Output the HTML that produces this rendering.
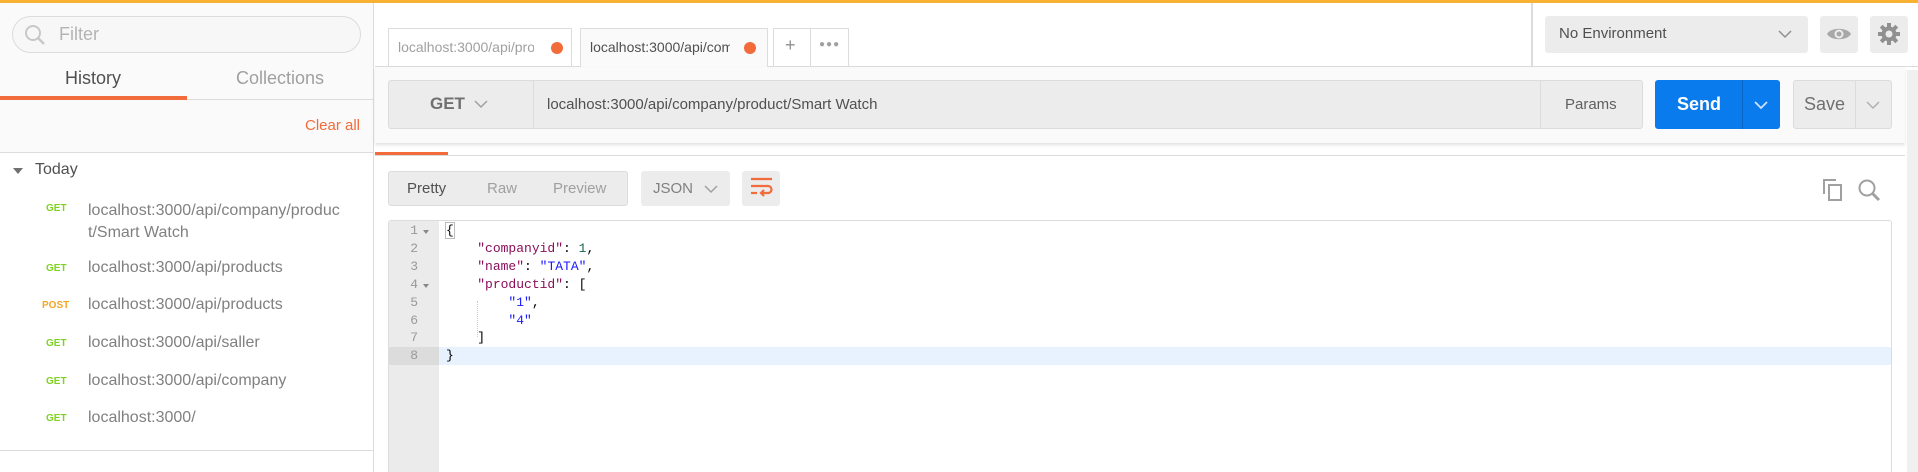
<!DOCTYPE html>
<html><head><meta charset="utf-8"><style>
*{box-sizing:border-box;margin:0;padding:0}
body{width:1918px;height:472px;overflow:hidden;background:#fff;font-family:"Liberation Sans",sans-serif;position:relative;color:#505050}
.a{position:absolute}
.topbar{left:0;top:0;width:1918px;height:3px;background:#f8b133}
.side{left:0;top:3px;width:374px;height:469px;background:#fafafa;border-right:1px solid #dcdcdc}
.filter{left:12px;top:16px;width:349px;height:37px;border:1px solid #dcdcdc;border-radius:19px;background:#f7f7f7}
.txt{white-space:nowrap}
.method{font-size:10px;font-weight:bold;color:#7ed321}
.url{font-size:16px;color:#808080}
.btn{background:#ececec;border:1px solid #dcdcdc;border-radius:3px}
.mono{font-family:"Liberation Mono",monospace;font-size:13px}
</style></head><body>
<div class="a topbar"></div>
<div class="a side"></div>
<div class="a filter"></div>
<svg class="a" style="left:24px;top:24px" width="22" height="22" viewBox="0 0 22 22"><circle cx="9" cy="9" r="7" fill="none" stroke="#c8c8c8" stroke-width="2"/><line x1="14" y1="14" x2="20" y2="20" stroke="#c8c8c8" stroke-width="2.5"/></svg>
<div class="a txt" style="left:59px;top:24px;font-size:18px;color:#b4b4b4">Filter</div>
<div class="a txt" style="left:65px;top:68px;font-size:18px;color:#505050">History</div>
<div class="a txt" style="left:236px;top:68px;font-size:18px;color:#a0a0a0">Collections</div>
<div class="a" style="left:0;top:99px;width:374px;height:1px;background:#dcdcdc"></div>
<div class="a" style="left:0;top:96px;width:187px;height:4px;background:#f26b3a"></div>
<div class="a txt" style="left:305px;top:117px;font-size:15px;color:#f26b3a">Clear all</div>
<div class="a" style="left:0;top:152px;width:374px;height:1px;background:#dcdcdc;"></div>
<div class="a" style="left:0;top:153px;width:373px;height:319px;background:#fff"></div>
<div class="a" style="left:0;top:450px;width:373px;height:1px;background:#dcdcdc;"></div>
<div class="a" style="left:13px;top:168px;width:0;height:0;border-left:5px solid transparent;border-right:5px solid transparent;border-top:6px solid #707070"></div>
<div class="a txt" style="left:35px;top:161px;font-size:16px;color:#505050">Today</div>
<div class="a txt method" style="left:46px;top:203px">GET</div>
<div class="a url" style="left:88px;top:200px;line-height:22px;width:256px;word-break:break-all">localhost:3000/api/company/product/Smart Watch</div>
<div class="a txt method" style="left:46px;top:263px">GET</div>
<div class="a txt url" style="left:88px;top:259px">localhost:3000/api/products</div>
<div class="a txt method" style="left:42px;top:300px;color:#f5a623">POST</div>
<div class="a txt url" style="left:88px;top:296px">localhost:3000/api/products</div>
<div class="a txt method" style="left:46px;top:338px">GET</div>
<div class="a txt url" style="left:88px;top:334px">localhost:3000/api/saller</div>
<div class="a txt method" style="left:46px;top:376px">GET</div>
<div class="a txt url" style="left:88px;top:372px">localhost:3000/api/company</div>
<div class="a txt method" style="left:46px;top:413px">GET</div>
<div class="a txt url" style="left:88px;top:409px">localhost:3000/</div>

<!-- tabs -->
<div class="a" style="left:375px;top:66px;width:1543px;height:1px;background:#dcdcdc"></div>
<div class="a" style="left:388px;top:28px;width:184px;height:38px;border:1px solid #dcdcdc;border-bottom:none;background:#fff"></div>
<div class="a txt" style="left:398px;top:39px;font-size:14px;color:#a0a0a0;width:136px;overflow:hidden">localhost:3000/api/products</div>
<div class="a" style="left:551px;top:42px;width:12px;height:12px;border-radius:50%;background:#f26b3a"></div>
<div class="a" style="left:580px;top:28px;width:188px;height:39px;border:1px solid #dcdcdc;border-bottom:none;background:#fafafa"></div>
<div class="a txt" style="left:590px;top:39px;font-size:14px;color:#505050;width:140px;overflow:hidden">localhost:3000/api/company</div>
<div class="a" style="left:744px;top:42px;width:12px;height:12px;border-radius:50%;background:#f26b3a"></div>
<div class="a" style="left:773px;top:28px;width:76px;height:38px;border:1px solid #dcdcdc;border-bottom:none;background:#fff"></div>
<div class="a" style="left:810px;top:28px;width:1px;height:38px;background:#dcdcdc"></div>
<div class="a txt" style="left:785px;top:35px;font-size:18px;color:#909090">+</div>
<div class="a txt" style="left:819px;top:39px;font-size:10px;color:#a0a0a0;letter-spacing:1px">●●●</div>
<div class="a" style="left:1531px;top:3px;width:2px;height:63px;background:#dcdcdc"></div>
<div class="a" style="left:1545px;top:16px;width:263px;height:37px;background:#ececec;border-radius:3px"></div>
<div class="a txt" style="left:1559px;top:25px;font-size:15px;color:#505050">No Environment</div>
<svg class="a" style="left:1778px;top:30px" width="14" height="9"><path d="M1 1l6 6 6-6" fill="none" stroke="#909090" stroke-width="1.5"/></svg>
<div class="a" style="left:1820px;top:16px;width:38px;height:37px;background:#ececec;border-radius:3px"></div>
<svg class="a" style="left:1826px;top:25px" width="26" height="18" viewBox="0 0 26 18"><path d="M1 9C5 2 21 2 25 9C21 16 5 16 1 9Z" fill="#a8a8a8"/><circle cx="13" cy="9" r="4.5" fill="#ececec"/><circle cx="13" cy="9" r="2.5" fill="#a8a8a8"/></svg>
<div class="a" style="left:1870px;top:16px;width:38px;height:37px;background:#ececec;border-radius:3px"></div>
<svg class="a" style="left:1877px;top:22px" width="24" height="24" viewBox="0 0 24 24"><g fill="#909090"><circle cx="12" cy="12" r="7.5"/><rect x="10" y="1" width="4" height="22"/><rect x="1" y="10" width="22" height="4"/><rect x="10" y="1" width="4" height="22" transform="rotate(45 12 12)"/><rect x="10" y="1" width="4" height="22" transform="rotate(-45 12 12)"/></g><circle cx="12" cy="12" r="3.5" fill="#ececec"/></svg>

<!-- request panel -->
<div class="a" style="left:375px;top:67px;width:1530px;height:76px;background:#fafafa;box-shadow:0 2px 3px rgba(0,0,0,.12)"></div>
<div class="a btn" style="left:388px;top:80px;width:1255px;height:49px"></div>
<div class="a" style="left:533px;top:80px;width:1px;height:49px;background:#dcdcdc"></div>
<div class="a" style="left:1540px;top:80px;width:1px;height:49px;background:#dcdcdc"></div>
<div class="a txt" style="left:430px;top:94px;font-size:17px;font-weight:bold;color:#707070">GET</div>
<svg class="a" style="left:474px;top:100px" width="14" height="9"><path d="M1 1l6 6 6-6" fill="none" stroke="#a0a0a0" stroke-width="1.5"/></svg>
<div class="a txt" style="left:547px;top:96px;font-size:15px;color:#505050">localhost:3000/api/company/product/Smart Watch</div>
<div class="a txt" style="left:1565px;top:96px;font-size:15px;color:#606060">Params</div>
<div class="a" style="left:1655px;top:80px;width:125px;height:49px;background:#097bed;border-radius:3px"></div>
<div class="a" style="left:1742px;top:80px;width:1px;height:49px;background:#0a63c0"></div>
<div class="a txt" style="left:1677px;top:94px;font-size:18px;font-weight:bold;color:#fff">Send</div>
<svg class="a" style="left:1754px;top:101px" width="14" height="9"><path d="M1 1l6 6 6-6" fill="none" stroke="#cfe3fb" stroke-width="1.8"/></svg>
<div class="a btn" style="left:1793px;top:80px;width:99px;height:49px"></div>
<div class="a" style="left:1855px;top:80px;width:1px;height:49px;background:#dcdcdc"></div>
<div class="a txt" style="left:1804px;top:94px;font-size:18px;color:#707070">Save</div>
<svg class="a" style="left:1866px;top:101px" width="14" height="9"><path d="M1 1l6 6 6-6" fill="none" stroke="#b0b0b0" stroke-width="1.5"/></svg>
<div class="a" style="left:1907px;top:70px;width:11px;height:402px;background:#f0f0f0"></div>

<div class="a" style="left:375px;top:155px;width:1530px;height:1px;background:#dcdcdc"></div>
<div class="a" style="left:375px;top:152px;width:73px;height:3px;background:#f26b3a"></div>

<div class="a btn" style="left:388px;top:171px;width:240px;height:35px"></div>
<div class="a txt" style="left:407px;top:180px;font-size:15px;color:#505050">Pretty</div>
<div class="a txt" style="left:487px;top:180px;font-size:15px;color:#a0a0a0">Raw</div>
<div class="a txt" style="left:553px;top:180px;font-size:15px;color:#a0a0a0">Preview</div>
<div class="a" style="left:641px;top:171px;width:89px;height:35px;background:#ececec;border-radius:3px"></div>
<div class="a txt" style="left:653px;top:180px;font-size:15px;color:#808080">JSON</div>
<svg class="a" style="left:704px;top:185px" width="14" height="9"><path d="M1 1l6 6 6-6" fill="none" stroke="#a0a0a0" stroke-width="1.5"/></svg>
<div class="a" style="left:742px;top:171px;width:38px;height:35px;background:#ececec;border-radius:3px"></div>
<svg class="a" style="left:750px;top:177px" width="24" height="22" viewBox="0 0 24 22"><g fill="none" stroke="#f26b3a" stroke-width="2.2"><path d="M1 2h21"/><path d="M1 9h17a3.5 3.5 0 0 1 0 7h-6"/><path d="M1 16h6"/><path d="M14 13l-3 3 3 3"/></g></svg>
<svg class="a" style="left:1822px;top:178px" width="22" height="24" viewBox="0 0 22 24"><g fill="none" stroke="#a0a0a0" stroke-width="2"><path d="M2 16V2h12"/><rect x="7" y="7" width="12" height="15"/></g></svg>
<svg class="a" style="left:1857px;top:178px" width="24" height="24" viewBox="0 0 24 24"><circle cx="10" cy="10" r="7.5" fill="none" stroke="#a0a0a0" stroke-width="2"/><line x1="15.5" y1="15.5" x2="22" y2="22" stroke="#a0a0a0" stroke-width="2.8"/></svg>

<!-- editor -->
<div class="a" style="left:388px;top:220px;width:1504px;height:252px;border:1px solid #dcdcdc;border-bottom:none;border-radius:3px 3px 0 0;background:#fff"></div>
<div class="a" style="left:389px;top:221px;width:50px;height:251px;background:#ebebeb"></div>
<div class="a" style="left:439px;top:347px;width:1452px;height:18px;background:#e8f2fe"></div>
<div class="a" style="left:389px;top:347px;width:50px;height:18px;background:#dcdcdc"></div>
<div class="a mono" style="left:398px;top:222px;line-height:17.9px;color:#999;text-align:right;width:20px">1<br>2<br>3<br>4<br>5<br>6<br>7<br>8</div>
<div class="a" style="left:423px;top:230px;border-left:3px solid transparent;border-right:3px solid transparent;border-top:4px solid #888"></div>
<div class="a" style="left:423px;top:284px;border-left:3px solid transparent;border-right:3px solid transparent;border-top:4px solid #888"></div>
<div class="a" style="left:477px;top:301px;width:0;height:36px;border-left:1px dotted #ccc"></div>
<pre class="a mono" style="left:446px;top:222px;line-height:17.9px;color:#000"><span style="outline:1px solid #bbb">{</span>
    <span style="color:#8b0e5a">"companyid"</span>: <span style="color:#164">1</span>,
    <span style="color:#8b0e5a">"name"</span>: <span style="color:#1a1aff">"TATA"</span>,
    <span style="color:#8b0e5a">"productid"</span>: [
        <span style="color:#1a1aff">"1"</span>,
        <span style="color:#1a1aff">"4"</span>
    ]
}</pre>
</body></html>
